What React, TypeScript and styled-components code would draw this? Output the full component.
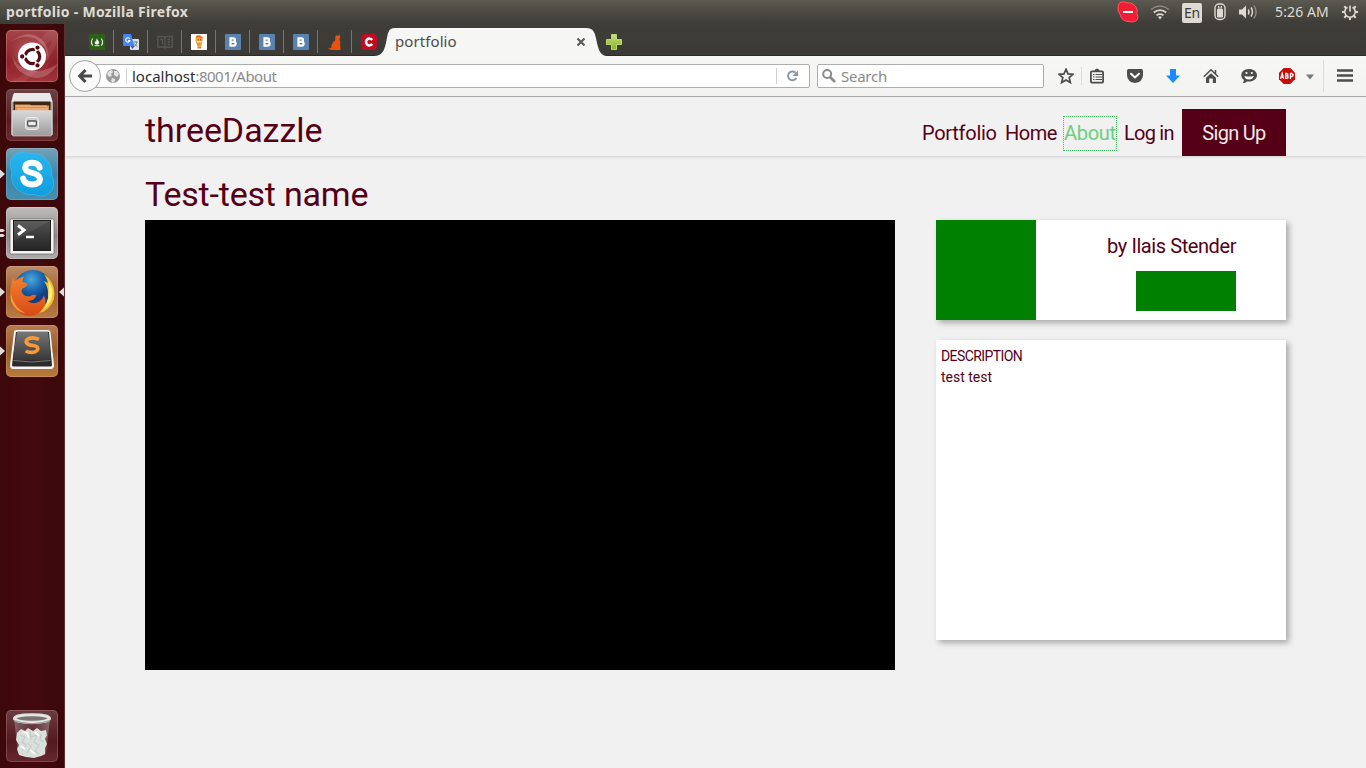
import React from 'react';
import styled, { createGlobalStyle, css } from 'styled-components';

const ui = `"Noto Sans", "Open Sans", sans-serif`;
const site = `Roboto, "Open Sans", sans-serif`;
const wine = '#560017';

const Global = createGlobalStyle`
  * { box-sizing: border-box; }
  body { margin: 0; background: #f1f1f1; overflow: hidden; }
  svg { display: block; flex: none; }
  h1, h2, p { margin: 0; font-weight: 400; }
`;

const Desktop = styled.div`
  width: 1366px;
  height: 768px;
  display: flex;
  flex-direction: column;
  background: #f1f1f1;
  font-family: ${ui};
`;

/* ---------- system panel ---------- */
const Panel = styled.header`
  height: 24px;
  flex: none;
  display: flex;
  align-items: center;
  padding: 0 7px 0 6px;
  background: linear-gradient(#5b5950, #3e3d38 95%);
  color: #dfdbd2;
`;
const PanelTitle = styled.span`
  flex: 1;
  font-size: 14px;
  line-height: 24px;
  font-weight: 700;
  letter-spacing: 0.29px;
`;
const Tray = styled.div`
  display: flex;
  align-items: center;
`;
const Status = styled.span`
  margin-right: 11px;
`;
const Clock = styled.span`
  width: 55px;
  margin: 0 11px 0 15px;
  font-size: 14px;
  line-height: 24px;
  letter-spacing: 0.12px;
  white-space: nowrap;
`;
const Lang = styled.span`
  width: 20px;
  height: 20px;
  margin: 1px 12px 0;
  border-radius: 2px;
  background: #dfdbd2;
  color: #3c3b37;
  font-size: 14px;
  line-height: 19px;
  text-align: center;
  letter-spacing: -0.2px;
`;

const Body = styled.div`
  flex: 1;
  display: flex;
  min-height: 0;
`;

/* ---------- launcher ---------- */
const Launcher = styled.nav`
  width: 65px;
  flex: none;
  display: flex;
  flex-direction: column;
  gap: 7px;
  padding: 6px 0 6px;
  background: linear-gradient(90deg, #3d080a, #420a0c 50%, #3b0709);
  border-right: 1px solid #5d3033;
`;
const Slot = styled.div<{ $last?: boolean }>`
  height: 52px;
  display: flex;
  align-items: center;
  justify-content: space-between;
  ${p => p.$last && css`margin-top: auto;`}
`;
const Marker = styled.span`
  width: 6px;
  display: flex;
`;
const Tile = styled.div<{ $bg: string; $edge: string }>`
  width: 52px;
  height: 52px;
  border-radius: 5px;
  overflow: hidden;
  background: ${p => p.$bg};
  box-shadow: inset 0 0 0 1px ${p => p.$edge};
`;

/* ---------- browser ---------- */
const Browser = styled.main`
  flex: 1;
  min-width: 0;
  display: flex;
  flex-direction: column;
`;
const TabStrip = styled.div`
  height: 32px;
  flex: none;
  display: flex;
  align-items: flex-end;
  padding-left: 15px;
  background: linear-gradient(#3e3d38, #3b3a36);
  border-bottom: 1px solid #2c2b28;
`;
const PinnedTab = styled.div<{ $last?: boolean }>`
  width: ${p => (p.$last ? 33 : 34)}px;
  height: 31px;
  display: flex;
  align-items: center;
  padding: 5px 0 0 9px;
`;
const Divider = styled.span`
  width: 1px;
  height: 23px;
  margin: 0 0 2px 8px;
  background: #77756e;
`;
const ActiveTab = styled.div`
  display: flex;
  width: 239px;
  height: 28px;
  margin: 0 0 -1px -14px;
`;
const TabFace = styled.div`
  flex: 1;
  display: flex;
  align-items: center;
  justify-content: space-between;
  background: #f6f6f4;
  color: #4c4c4c;
  font-size: 15px;
  line-height: 27px;
  letter-spacing: 0.08px;
`;
const TabLabel = styled.span`
  margin-top: -1px;
`;
const NewTab = styled.div`
  align-self: center;
  padding: 5px 0 0 0;
  margin-left: -4px;
`;
const Toolbar = styled.div`
  height: 41px;
  flex: none;
  display: flex;
  align-items: center;
  padding-left: 4px;
  background: linear-gradient(#f7f7f5, #f3f3f2);
  border-bottom: 1px solid #aeaeae;
`;
const Back = styled.div`
  width: 32px;
  height: 32px;
  z-index: 1;
  flex: none;
  border: 1px solid #a3a3a3;
  border-radius: 50%;
  background: #fafafa;
  display: flex;
  align-items: center;
  justify-content: center;
`;
const Field = styled.div<{ $w: number; $url?: boolean }>`
  width: ${p => p.$w}px;
  height: 24px;
  flex: none;
  display: flex;
  align-items: center;
  background: #fff;
  border: 1px solid #adadad;
  border-radius: 2px;
  font-size: 15px;
  line-height: 22px;
  color: #8a8a8a;
  ${p => (p.$url ? css`margin-left: -11px; padding: 0 10px 0 14px;` : css`margin-left: 7px; padding-left: 3px;`)}
`;
const UrlRule = styled.span<{ $gap: string }>`
  width: 1px;
  height: 16px;
  margin: ${p => p.$gap};
  background: #d0d0d0;
`;
const Host = styled.span`
  color: #2b2b2b;
`;
const Path = styled.span`
  flex: 1;
  letter-spacing: -0.5px;
`;
const SearchText = styled.span`
  margin-left: 4px;
  letter-spacing: -0.25px;
`;
const Tools = styled.div`
  display: flex;
  align-items: center;
  height: 40px;
  margin-left: 14px;
`;
const Tool = styled.span<{ $w: number; $gap: number }>`
  width: ${p => p.$w}px;
  margin-right: ${p => p.$gap}px;
  display: flex;
  justify-content: center;
`;
const ToolRule = styled.span<{ $h: number; $gap: number }>`
  width: 1px;
  height: ${p => p.$h}px;
  margin-right: ${p => p.$gap}px;
  background: #dadada;
`;

/* ---------- web page ---------- */
const Page = styled.div`
  flex: 1;
  background: #f1f1f1;
  color: ${wine};
  font-family: ${site};
`;
const SiteHeader = styled.div`
  height: 59px;
  display: flex;
  justify-content: space-between;
  align-items: flex-end;
  padding: 0 80px;
  box-shadow: 0 1px 3px rgba(0, 0, 0, 0.14);
`;
const Logo = styled.h1`
  font-size: 34px;
  line-height: 52px;
  letter-spacing: -0.05px;
`;
const Menu = styled.div`
  display: flex;
  height: 47px;
  font-size: 20px;
`;
const MenuLink = styled.span<{ $w: number; $track: number; $focus?: boolean }>`
  width: ${p => p.$w}px;
  height: 35px;
  margin: 7px 7px 0 0;
  padding-left: 1px;
  line-height: 34px;
  white-space: nowrap;
  letter-spacing: ${p => p.$track}px;
  ${p => p.$focus && css`
    margin-right: 6px;
    padding-left: 0;
    border: 1px dotted #3fb85a;
    line-height: 32px;
    color: #6bcf7f;
  `}
`;
const SignUp = styled.span`
  width: 104px;
  height: 47px;
  background: ${wine};
  color: #f1e9eb;
  line-height: 48px;
  text-align: center;
  letter-spacing: -0.7px;
`;
const Title = styled.h2`
  height: 64px;
  padding: 13px 80px 0;
  font-size: 34px;
  line-height: 50px;
  letter-spacing: -0.2px;
`;
const Content = styled.div`
  display: flex;
  padding: 0 80px;
  gap: 41px;
`;
const Stage = styled.div`
  width: 750px;
  height: 450px;
  background: #000;
`;
const Side = styled.div`
  display: flex;
  flex-direction: column;
  gap: 20px;
`;
const Card = styled.section<{ $h: number }>`
  width: 350px;
  height: ${p => p.$h}px;
  background: #fff;
  box-shadow: 3px 3px 6px rgba(0, 0, 0, 0.3);
`;
const Author = styled(Card)`
  display: flex;
  justify-content: space-between;
`;
const Avatar = styled.div`
  width: 100px;
  background: #008000;
`;
const Info = styled.div`
  display: flex;
  flex-direction: column;
  align-items: flex-end;
  padding: 12px 50px 0 0;
  font-size: 20px;
  line-height: 28px;
  letter-spacing: -0.42px;
`;
const Badge = styled.div`
  width: 100px;
  height: 40px;
  margin-top: 11px;
  background: #008000;
`;
const Description = styled(Card)`
  padding: 6px 5px;
  font-size: 14px;
  line-height: 21px;
`;
const Caption = styled.p`
  letter-spacing: -0.58px;
`;

/* ---------- icons ---------- */
const VkIcon = () => (
  <svg width="16" height="16"><rect width="16" height="16" rx="1" fill="#5a82ae" />
    <path d="M5.500 4.400h2.800a1.600 1.600 0 0 1 0 3.400H5.500zm0 3.400h3.200a1.800 1.800 0 0 1 0 3.800H5.500z" fill="none" stroke="#fff" strokeWidth="2.200" /></svg>
);
const Favicons = [
  <svg width="16" height="16"><rect width="16" height="16" fill="#2c6018" />
    <path d="M3.800 4.500Q1 8 3.800 11.700M12.200 4.500q2.800 3.600 0 7.200" fill="none" stroke="#e6ecdf" strokeWidth="1.100" />
    <path d="M8 4q.2 1.800 1.500 3t.2 2.900q-1.700 1-3.400 0Q5 8.500 6.300 7q.5 1 .9.600Q7 5.500 8 4z" fill="#f4f7f0" />
    <path d="M5.500 11.700h5" stroke="#e6ecdf" strokeWidth="1" /></svg>,
  <svg width="16" height="16"><rect x="7" y="5" width="9" height="11" rx="1" fill="#dfe3ea" />
    <path d="M1 0h7l3.500 12H1a1 1 0 0 1-1-1V1a1 1 0 0 1 1-1z" fill="#4285f4" /><path d="M7.500 12h4l-2 3z" fill="#2a56b8" />
    <path d="M6.800 4.800A2.200 2.200 0 1 0 7 6.600H5" fill="none" stroke="#fff" strokeWidth="1.100" />
    <path d="M10.500 8h4.500M12.700 7v1M14 8q-.7 3-2.500 4.500M11.500 9.500q1 2 3 3" fill="none" stroke="#6d7780" strokeWidth=".9" /></svg>,
  <svg width="16" height="16"><path d="M.8 2.500H6q1.500 0 2 1 .5-1 2-1h5.200V13H10q-1.500 0-2 .8-.5-.8-2-.8H.8z" fill="none" stroke="#57554f" strokeWidth="1.500" /><path d="M8 3.500v10M3 5.500h2.500v5M10.500 5.500H13M10.500 8H13M10.500 10.500H13" fill="none" stroke="#57554f" strokeWidth="1.300" /></svg>,
  <svg width="16" height="16"><rect width="16" height="16" fill="#fff" />
    <path d="M4.500 5q0-4.500 2.500-3.500Q9 0 10 2q3 1 1.500 4L11 9.500 10 13H6.500L5.500 9.500 4.500 7z" fill="#f5a742" /><path d="M5.500 3.500q2-2.500 5.500.5" stroke="#e8632c" strokeWidth="1.500" fill="none" />
    <path d="M6 7h4.300v1.500H6z" fill="#fbe08c" /><path d="M6.300 10h3.500M6.300 13.800h4" stroke="#d5873f" strokeWidth="1.400" /><path d="M6.700 5.800h1.100M9.100 5.800h1.100" stroke="#624227" /></svg>,
  <VkIcon />, <VkIcon />, <VkIcon />,
  <svg width="16" height="16"><path d="M9 1l1.500.9L12.500 .4l.8 2.900-.9 2.200q1.300 2 .7 4.500l.5 6H6.200q-3.200.3-5-1.700l.3-.9q1.500 1.200 2.700.7Q4 9.500 8.300 6.300 7.800 3.500 9 1z" fill="#ea5010" /></svg>,
  <svg width="16" height="16"><rect width="16" height="16" rx="4" fill="#c00d22" /><path d="M11.200 6A3.400 3.400 0 1 0 11.200 10" fill="none" stroke="#fff" strokeWidth="2.500" /></svg>,
];

const ink = '#4d4d4d';

const Arrow = ({ left }: { left?: boolean }) => (
  <svg width="6" height="10"><path d={left ? 'M6 .5v9L1 5z' : 'M0 .5v9L5 5z'} fill="#e0dcdc" /></svg>
);

const UbuntuIcon = () => (
  <svg width="52" height="52">
    <defs><radialGradient id="swirl"><stop offset="0" stopColor="#d98888" /><stop offset="1" stopColor="#8f2228" stopOpacity="0" /></radialGradient></defs>
    <circle cx="24" cy="24" r="26" fill="url(#swirl)" />
    <path d="M4 12Q22-2 35 9T38 43Q47 25 35 13T4 12zM7 17Q4 39 22 46T52 34Q34 45 19 39T7 17z" fill="#fff" fillOpacity=".2" />
    <path d="M0 40Q20 24 43 0H52V9Q46 31 18 52H4Q38 36 46 10" fill="#fff" fillOpacity=".07" />
    <circle cx="26" cy="26.500" r="14" fill="#fff" />
    <circle cx="26.500" cy="26.500" r="7.200" fill="none" stroke="#560b11" strokeWidth="3.200" />
    <path d="M26.500 26.500L14 26.500M26.500 26.500L33 15.500M26.500 26.500L33 37.500" stroke="#fff" strokeWidth="1.800" />
    <g fill="#560b11" stroke="#fff" strokeWidth="1.100"><circle cx="16.200" cy="26.500" r="2.700" /><circle cx="31.500" cy="17.600" r="2.700" /><circle cx="31.500" cy="35.400" r="2.700" /></g>
  </svg>
);
const FilesIcon = () => (
  <svg width="52" height="52">
    <defs><linearGradient id="cab" x2="0" y2="1"><stop stopColor="#dadada" /><stop offset="1" stopColor="#9a9a9a" /></linearGradient></defs>
    <path d="M7 5h37l3 9v32H5V14z" fill="#a9a9a9" /><path d="M8 4h36l2.500 9h-41z" fill="#e9e9e9" />
    <path d="M7.500 12.500h37V24h-37z" fill="#3f2413" /><path d="M9 15.500h15l1 1h18V23H9z" fill="#de9150" /><path d="M10 17h31M11 20h31" stroke="#f7c690" strokeWidth="1.200" />
    <path d="M6.500 21.500h39V46a1 1 0 0 1-1 1h-37a1 1 0 0 1-1-1z" fill="url(#cab)" stroke="#dcdcdc" strokeWidth=".6" />
    <rect x="19.500" y="28.500" width="13" height="12" rx="2.500" fill="#cfcfcf" stroke="#efefef" /><rect x="21.700" y="32" width="8.600" height="5" rx=".8" fill="#eee" stroke="#555" strokeWidth="1.300" />
  </svg>
);
const SkypeIcon = () => (
  <svg width="52" height="52">
    <defs><linearGradient id="sky" x2="0" y2="1"><stop stopColor="#2ab6ee" /><stop offset="1" stopColor="#0f9ede" /></linearGradient></defs>
    <path d="M16 4q5 0 8 1.500Q35 4 42 13q5 7 4 15 2.500 4 1.500 10-2 9-12 10-4 0-7-1.500Q17 48 10 40 4 33 6 23 3 19 4.500 13 7 5 16 4z" fill="url(#sky)" stroke="#4fbdea" strokeWidth=".6" />
    <path d="M33.600 19.600Q32.300 14.700 26 14.700t-6.900 4.900q0 4 7 5.300t8 6.200q-.5 5.500-8 5.500t-9-6" fill="none" stroke="#fff" strokeWidth="6" strokeLinecap="round" />
  </svg>
);
const TerminalIcon = () => (
  <svg width="52" height="52">
    <defs><linearGradient id="scr" x2="0" y2="1"><stop stopColor="#505050" /><stop offset="1" stopColor="#242424" /></linearGradient></defs>
    <rect x="4" y="12" width="44" height="35" rx="1.500" fill="#f5f5f5" stroke="#6f6f6f" strokeWidth=".8" /><rect x="7.500" y="13.500" width="37" height="30" fill="url(#scr)" stroke="#1f1f1f" />
    <path d="M8 14h36L8 34z" fill="#fff" fillOpacity=".07" />
    <path d="M12 18.500l6 4.600-6 4.600" fill="none" stroke="#fff" strokeWidth="3" /><path d="M20 30h8" stroke="#fff" strokeWidth="2.400" />
  </svg>
);
const FirefoxIcon = () => (
  <svg width="52" height="52">
    <defs><radialGradient id="globe" cx=".45" cy=".25"><stop stopColor="#4aa9dc" /><stop offset=".6" stopColor="#1b65ae" /><stop offset="1" stopColor="#143e80" /></radialGradient>
      <linearGradient id="fox" x2="0" y2="1"><stop stopColor="#ef832d" /><stop offset="1" stopColor="#da4818" /></linearGradient></defs>
    <circle cx="27" cy="23" r="19" fill="url(#globe)" />
    <path d="M38 8q10 7 10.500 19T37 46l-10 2q13-5 15-16 1-10-4-17l4 2q-1-4-4-9z" fill="#f6bd2e" />
    <path d="M42.500 15q6 8 3 18-3 7-8 11 5-8 5-16 .7-7 0-13z" fill="#fff07c" />
    <path d="M7 11q.5 3 2 4 5-4 9-4.500-2 3-1.500 5.500 3 .5 5 2-1 3-5 4.500-1.500 2-.5 4 3 5 8.500 3.500 3-2 6-.5-2.500 5.500-9 5.500 5 4 12 .5 3-2 4.500-6 3.500 7-1 13-5 7.500-14 7.500Q11 49 6 38 2.500 29 5 20q.2-5 2-9z" fill="url(#fox)" />
    <path d="M5 28q3 14 15 19.500Q9 46 5 35q-.8-4 0-7z" fill="#f39a3b" />
  </svg>
);
const SublimeIcon = () => (
  <svg width="52" height="52">
    <defs><linearGradient id="key" x2="0" y2="1"><stop stopColor="#777" /><stop offset="1" stopColor="#383838" /></linearGradient></defs>
    <path d="M8 7q0-2 3-2h31q2 0 2.500 2L48 40q0 4-3 4H7q-3 0-3-4z" fill="#f4f4f4" />
    <path d="M10 7h33l3 33q0 1.500-2 1.500H8q-2 0-2-1.500z" fill="#2b2b2b" />
    <path d="M11 6.500h31l3 26q-1 2.500-3 2.500H10q-2 0-3-2.500z" fill="url(#key)" /><path d="M7.500 35.500q18 3 37 0" stroke="#777" fill="none" />
    <path d="M33 14.300q-6-2.400-10-.8t-2.400 4.400q1.400 2 6.400 2.600t4.800 3.500q-1 3.200-6 3.400-4 0-6-1.600" fill="none" stroke="#f7993c" strokeWidth="3.600" />
  </svg>
);
const TrashIcon = () => (
  <svg width="52" height="52">
    <defs><linearGradient id="glass" x2="1" y2="0"><stop stopColor="#bfb6b6" stopOpacity=".4" /><stop offset=".5" stopColor="#8a6a6a" stopOpacity=".15" /><stop offset="1" stopColor="#bfb6b6" stopOpacity=".45" /></linearGradient></defs>
    <path d="M8 8h36l-4 35q-1 4-14 4t-14-4z" fill="url(#glass)" />
    <path d="M11 23l4-4 4 2 3-3 5 3 4-3 4 3 5-1 1 5-2 4 2 5-2 4v6l-4 2-7 2-8-1-7-2-2-6 2-4-3-5z" fill="#d9dfdb" />
    <path d="M14 25l5 2-3 5 4 3-4 6M24 21l1 6 6-2-3 7 5 3-4 6 4 3M22 33l3 4-4 6M35 24l-1 6 4 2M26 29l-4-4" fill="none" stroke="#c3ccc7" strokeWidth="1.200" />
    <path d="M17 22l4 1 2 5M29 22l4 4M24 40l5 4M15 36l4 3" fill="none" stroke="#fff" strokeWidth="1.800" />
    <ellipse cx="26" cy="8.500" rx="17.500" ry="3.800" fill="#7d7072" stroke="#dfe3e1" strokeWidth="3" /><path d="M8 10.500q18 6.500 36 0" stroke="#9aa29e" fill="none" strokeWidth="1.200" />
  </svg>
);

const apps = [
  { icon: <UbuntuIcon />, bg: 'linear-gradient(#a5474c, #8b2026 60%, #a3353b)', edge: 'rgba(255,190,190,.25)', mark: 0 },
  { icon: <FilesIcon />, bg: 'linear-gradient(#6b4345, #581b20 60%, #692a2f)', edge: 'rgba(255,200,200,.15)', mark: 0 },
  { icon: <SkypeIcon />, bg: 'linear-gradient(#76a1b6, #3b87ad 50%, #488fae)', edge: 'rgba(255,255,255,.15)', mark: 1 },
  { icon: <TerminalIcon />, bg: 'linear-gradient(#c0bdbd, #8e8989 55%, #b0abab)', edge: 'rgba(255,255,255,.2)', mark: 2 },
  { icon: <FirefoxIcon />, bg: 'linear-gradient(#bf8d66, #9e5f33 50%, #b77d44)', edge: 'rgba(255,220,180,.2)', mark: 3 },
  { icon: <SublimeIcon />, bg: 'linear-gradient(#b77c50, #985c2a 50%, #b77c3b)', edge: 'rgba(255,220,180,.2)', mark: 1 },
];

export default function App() {
  return (
    <Desktop>
      <Global />
      <Panel>
        <PanelTitle>portfolio - Mozilla Firefox</PanelTitle>
        <Tray>
          <Status><svg width="22" height="22"><path d="M3 1.500q4-1.500 7 .3 7-.5 10 6.200.5 2-.2 4.500 2 3 .7 6-3 3.500-8.500 2-7 .2-9-7Q.200 9 1 6q.3-3 2-4.500z" fill="#f21c35" stroke="#ff5663" strokeWidth="1" /><path d="M6 11h10" stroke="#fff" strokeWidth="2" /></svg></Status>
          <svg width="20" height="16" viewBox="-1 0 20 16">
            <path d="M0 5.500q9-7 18 0" fill="none" stroke="#8e8b84" strokeWidth="1.500" /><path d="M2.800 8.500q6.200-4.800 12.400 0M5.500 11.400q3.500-2.500 7 0" fill="none" stroke="#dfdbd2" strokeWidth="1.700" /><path d="M7 13q2-1.300 4 0L9 15.500z" fill="#dfdbd2" />
          </svg>
          <Lang>En</Lang>
          <svg width="12" height="18"><rect x="1" y="1" width="10" height="15.500" rx="4" fill="none" stroke="#dfdbd2" strokeWidth="1.400" /><path d="M4 3.500h1v2.500M8 3.500H7v2.500M3.500 6.500h5V14h-5z" fill="#dfdbd2" stroke="#dfdbd2" /></svg>
          <svg width="34" height="18"><path d="M13 6.500h3l4-4v13l-4-4h-3z" fill="#dfdbd2" /><path d="M22.300 6.500q1.500 2.500 0 5M25 4.500q3 4.500 0 9" fill="none" stroke="#dfdbd2" strokeWidth="1.500" /><path d="M27.800 2.500q4.700 6.500 0 13" fill="none" stroke="#8e8b84" strokeWidth="1.400" /></svg>
          <Clock>5:26 AM</Clock>
          <svg width="18" height="18"><g fill="none" stroke="#dfdbd2"><path d="M6.500 4.300A5.300 5.300 0 1 0 11.500 4.300M9 2.500v6" strokeWidth="1.600" /><path d="M1 9h2.600M14.400 9H17M9 14.400V17M3.300 3.300l1.900 1.900M14.700 3.300l-1.900 1.900M3.300 14.700l1.900-1.900M14.700 14.700l-1.900-1.900" strokeWidth="2" /></g></svg>
        </Tray>
      </Panel>
      <Body>
        <Launcher>
          {apps.map((a, i) => (
            <Slot key={i}>
              <Marker>
                {(a.mark === 1 || a.mark === 3) && <Arrow />}
                {a.mark === 2 && <svg width="6" height="10"><path d="M0 1h3l2 1.500L3 4H0zM0 6h3l2 1.500L3 9H0z" fill="#e0dcdc" /></svg>}
              </Marker>
              <Tile $bg={a.bg} $edge={a.edge}>{a.icon}</Tile>
              <Marker>{a.mark === 3 && <Arrow left />}</Marker>
            </Slot>
          ))}
          <Slot $last>
            <Marker />
            <Tile $bg="linear-gradient(#6c3c40, #541a1f 60%, #64272c)" $edge="rgba(255,200,200,.2)"><TrashIcon /></Tile>
            <Marker />
          </Slot>
        </Launcher>
        <Browser>
          <TabStrip>
            {Favicons.map((icon, i) => (
              <PinnedTab key={i} $last={i === 8}>
                {icon}
                {i < 8 && <Divider />}
              </PinnedTab>
            ))}
            <ActiveTab>
              <svg width="24" height="28"><path d="M3 28C11 28 13 23 15 15 17 5 17 0 24 0V28z" fill="#f6f6f4" /></svg>
              <TabFace>
                <TabLabel>portfolio</TabLabel>
                <svg width="10" height="10"><path d="M1.500 1.500l7 7M8.500 1.500l-7 7" stroke="#5c5c5c" strokeWidth="2.200" /></svg>
              </TabFace>
              <svg width="24" height="28"><path d="M21 28C15 28 13 23 11 15 9 5 8 0 0 0V28z" fill="#f6f6f4" /></svg>
            </ActiveTab>
            <NewTab>
              <svg width="16" height="16"><defs><linearGradient id="plus" x2="0" y2="1"><stop stopColor="#c5e07e" /><stop offset="1" stopColor="#86b31f" /></linearGradient></defs><path d="M5.500 .5h5v5h5v5h-5v5h-5v-5h-5v-5h5z" fill="url(#plus)" stroke="#b9d86a" /></svg>
            </NewTab>
          </TabStrip>
          <Toolbar>
            <Back><svg width="16" height="16"><path d="M8.500 2L2.800 8l5.700 6M3 8h12" fill="none" stroke="#4a4a4a" strokeWidth="3.200" /></svg></Back>
            <Field $w={720} $url>
              <svg width="16" height="16"><circle cx="8" cy="8" r="7" fill="#999" /><path d="M2 6q2-4 5-4l1 2-2 2 1 2-3 1zM9 3l3 0 2 3-2 3-3-2zM7 10l3 1 0 2-2 2-2-2z" fill="#e3e3e3" /></svg>
              <UrlRule $gap="0 5px 0 5px" />
              <Host>localhost</Host>
              <Path>:8001/About</Path>
              <UrlRule $gap="0 9px 0 0" />
              <svg width="13" height="12"><path d="M10.300 8A4.400 4.400 0 1 1 9.500 2.700" fill="none" stroke="#8896a3" strokeWidth="1.900" /><path d="M12 .5V6H6.500z" fill="#8896a3" /></svg>
            </Field>
            <Field $w={227}>
              <svg width="16" height="16"><circle cx="6.200" cy="6" r="4" fill="none" stroke="#8b8b8b" strokeWidth="2" /><path d="M9 9l5 5" stroke="#8b8b8b" strokeWidth="2.600" /></svg>
              <SearchText>Search</SearchText>
            </Field>
            <Tools>
              <Tool $w={16} $gap={7}><svg width="16" height="16"><path d="M8 1.200l2 4.700 5 .4-3.800 3.300 1.200 5L8 12l-4.400 2.600 1.200-5L1 6.300l5-.4z" fill="none" stroke={ink} strokeWidth="1.700" /></svg></Tool>
              <ToolRule $h={18} $gap={7} />
              <Tool $w={16} $gap={22}><svg width="16" height="16"><rect x="1.900" y="3.400" width="12.200" height="11.200" rx="1" fill="none" stroke={ink} strokeWidth="1.800" /><path d="M5 3q3-5 6 0z" fill={ink} /><path d="M4 6.500h1.500M6.500 6.500H13M4 9h1.500M6.500 9H13M4 11.500h1.500M6.500 11.500H13" stroke={ink} strokeWidth="1.200" /></svg></Tool>
              <Tool $w={16} $gap={22}><svg width="16" height="16"><path d="M0 2.500Q0 1 1.500 1h13Q16 1 16 2.500V7q-.3 7-8 8Q.300 14 0 7z" fill={ink} /><path d="M4 5.700l4 3.700 4-3.700" fill="none" stroke="#fff" strokeWidth="2" strokeLinecap="round" /></svg></Tool>
              <Tool $w={16} $gap={22}><svg width="16" height="16"><path d="M5 1h6v6.500h4L8 15 1 7.500h4z" fill="#1a8cff" /></svg></Tool>
              <Tool $w={16} $gap={22}><svg width="16" height="16"><path d="M.8 8.700L8 1.800l7.200 6.900M12.500 2v4" fill="none" stroke={ink} strokeWidth="1.500" /><path d="M3 9.800l5-4.600 5 4.600V15H9.800v-4.500H6.200V15H3z" fill={ink} /></svg></Tool>
              <Tool $w={16} $gap={22}><svg width="16" height="16"><path d="M8 1c4.500 0 8 2.700 8 6.300S12.500 13.600 8 13.600q-1 0-2-.2Q4 15.500 1.500 15q1.500-1 1.400-2.900Q.300 10.200.200 7.300.300 1.500 8 1z" fill={ink} /><circle cx="5.500" cy="5" r="1.100" fill="#fff" /><circle cx="10.800" cy="5" r="1.100" fill="#fff" /><path d="M3.300 8q4.700 1.200 9.500 0-1 3.500-4.800 3.500T3.300 8z" fill="#fff" /></svg></Tool>
              <Tool $w={16} $gap={11}><svg width="16" height="16"><path d="M4.700 0h6.600L16 4.700v6.600L11.300 16H4.700L0 11.300V4.700z" fill="#c70d0b" /><path d="M1.600 10.800l1.600-5.300 1.500 5.300M2.200 9.200h2M6.700 5.500v4.800h1.200q1.400-.2 1.300-1.300T7.900 7.900H6.700h1q1.300-.1 1.200-1.200T7.700 5.500zM11.500 11V5.500h1q1.700.2 1.700 1.500t-1.700 1.600h-1" fill="none" stroke="#fff" strokeWidth="1.300" /></svg></Tool>
              <Tool $w={8} $gap={9}><svg width="8" height="8"><path d="M0 2.500h8L4 7.500z" fill="#777" /></svg></Tool>
              <ToolRule $h={32} $gap={13} />
              <Tool $w={16} $gap={0}><svg width="16" height="16"><path d="M0 2.500h16M0 7.500h16M0 12.500h16" stroke={ink} strokeWidth="2.500" /></svg></Tool>
            </Tools>
          </Toolbar>
          <Page>
            <SiteHeader>
              <Logo>threeDazzle</Logo>
              <Menu>
                <MenuLink $w={76} $track={-0.28}>Portfolio</MenuLink>
                <MenuLink $w={52} $track={-0.5}>Home</MenuLink>
                <MenuLink $w={54} $track={-0.3} $focus>About</MenuLink>
                <MenuLink $w={52} $track={-0.75}>Log in</MenuLink>
                <SignUp>Sign Up</SignUp>
              </Menu>
            </SiteHeader>
            <Title>Test-test name</Title>
            <Content>
              <Stage />
              <Side>
                <Author $h={100}>
                  <Avatar />
                  <Info>
                    <span>by Ilais Stender</span>
                    <Badge />
                  </Info>
                </Author>
                <Description $h={300}>
                  <Caption>DESCRIPTION</Caption>
                  <p>test test</p>
                </Description>
              </Side>
            </Content>
          </Page>
        </Browser>
      </Body>
    </Desktop>
  );
}
